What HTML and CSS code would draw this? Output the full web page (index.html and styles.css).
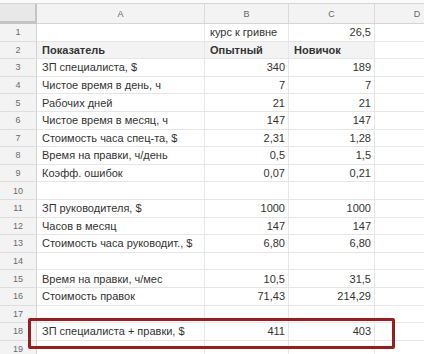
FILE: index.html
```html
<!DOCTYPE html>
<html>
<head>
<meta charset="utf-8">
<link rel="stylesheet" href="styles.css">
</head>
<body>
<div class="page">
  <div class="topstrip"></div>
  <div class="sheet">
    <div class="row head">
      <div class="corner"></div>
      <div class="colh">A</div>
      <div class="colh">B</div>
      <div class="colh">C</div>
      <div class="colh">D</div>
    </div>
    <div class="row"><div class="num">1</div><div class="c"></div><div class="c">курс к гривне</div><div class="c r">26,5</div><div class="c"></div></div>
    <div class="row bold"><div class="num">2</div><div class="c g">Показатель</div><div class="c g">Опытный</div><div class="c g">Новичок</div><div class="c"></div></div>
    <div class="row"><div class="num">3</div><div class="c">ЗП специалиста, $</div><div class="c r">340</div><div class="c r">189</div><div class="c"></div></div>
    <div class="row"><div class="num">4</div><div class="c">Чистое время в день, ч</div><div class="c r">7</div><div class="c r">7</div><div class="c"></div></div>
    <div class="row"><div class="num">5</div><div class="c">Рабочих дней</div><div class="c r">21</div><div class="c r">21</div><div class="c"></div></div>
    <div class="row"><div class="num">6</div><div class="c">Чистое время в месяц, ч</div><div class="c r">147</div><div class="c r">147</div><div class="c"></div></div>
    <div class="row"><div class="num">7</div><div class="c">Стоимость часа спец-та, $</div><div class="c r">2,31</div><div class="c r">1,28</div><div class="c"></div></div>
    <div class="row"><div class="num">8</div><div class="c">Время на правки, ч/день</div><div class="c r">0,5</div><div class="c r">1,5</div><div class="c"></div></div>
    <div class="row"><div class="num">9</div><div class="c">Коэфф. ошибок</div><div class="c r">0,07</div><div class="c r">0,21</div><div class="c"></div></div>
    <div class="row"><div class="num">10</div><div class="c"></div><div class="c"></div><div class="c"></div><div class="c"></div></div>
    <div class="row"><div class="num">11</div><div class="c">ЗП руководителя, $</div><div class="c r">1000</div><div class="c r">1000</div><div class="c"></div></div>
    <div class="row"><div class="num">12</div><div class="c">Часов в месяц</div><div class="c r">147</div><div class="c r">147</div><div class="c"></div></div>
    <div class="row"><div class="num">13</div><div class="c">Стоимость часа руководит., $</div><div class="c r">6,80</div><div class="c r">6,80</div><div class="c"></div></div>
    <div class="row"><div class="num">14</div><div class="c"></div><div class="c"></div><div class="c"></div><div class="c"></div></div>
    <div class="row"><div class="num">15</div><div class="c">Время на правки, ч/мес</div><div class="c r">10,5</div><div class="c r">31,5</div><div class="c"></div></div>
    <div class="row"><div class="num">16</div><div class="c">Стоимость правок</div><div class="c r">71,43</div><div class="c r">214,29</div><div class="c"></div></div>
    <div class="row"><div class="num">17</div><div class="c"></div><div class="c"></div><div class="c"></div><div class="c"></div></div>
    <div class="row"><div class="num">18</div><div class="c">ЗП специалиста + правки, $</div><div class="c r">411</div><div class="c r">403</div><div class="c"></div></div>
    <div class="row"><div class="num">19</div><div class="c"></div><div class="c"></div><div class="c"></div><div class="c"></div></div>
    <div class="highlight"></div>
  </div>
</div>
</body>
</html>
```
FILE: styles.css
```css
html, body {
  margin: 0;
  padding: 0;
  background: #ffffff;
  overflow: hidden;
}
.page {
  width: 424px;
  height: 354px;
  overflow: hidden;
  font-family: "Liberation Sans", Arial, sans-serif;
  color: #333333;
}
.topstrip {
  height: 4px;
  background: #fafafa;
  border-bottom: 1px solid #d6d6d6;
  box-sizing: border-box;
}
.sheet {
  position: relative;
  width: 460px;
}
.row {
  display: grid;
  grid-template-columns: 37px 168px 84px 86px 85px;
  height: 17.6px;
}
.row.head {
  height: 20px;
}
.corner {
  background: #e8e8e8;
  border-right: 2px solid #c4c4c4;
  border-bottom: 3px solid #c4c4c4;
  box-sizing: border-box;
}
.colh {
  background: #f3f3f3;
  border-right: 1px solid #dadada;
  border-bottom: 1px solid #d4d4d4;
  box-sizing: border-box;
  font-size: 9px;
  color: #666;
  display: flex;
  align-items: center;
  justify-content: center;
}
.num {
  background: #f3f3f3;
  border-right: 1px solid #d2d2d2;
  border-bottom: 1px solid #dedede;
  box-sizing: border-box;
  font-size: 9px;
  color: #6a6a6a;
  display: flex;
  align-items: center;
  justify-content: center;
}
.c {
  border-right: 1px solid #e6e6e6;
  border-bottom: 1px solid #e6e6e6;
  box-sizing: border-box;
  font-size: 11px;
  display: flex;
  align-items: center;
  padding: 0 4px 0 5px;
  white-space: nowrap;
  overflow: hidden;
}
.c.r {
  justify-content: flex-end;
  padding-right: 3px;
}
.c.g {
  background: #f3f3f3;
}
.bold .c {
  font-weight: bold;
}
.highlight {
  position: absolute;
  left: 28px;
  top: 314px;
  width: 367px;
  height: 31px;
  border: 3px solid #961e1e;
  border-radius: 2px;
  box-sizing: border-box;
}
```
